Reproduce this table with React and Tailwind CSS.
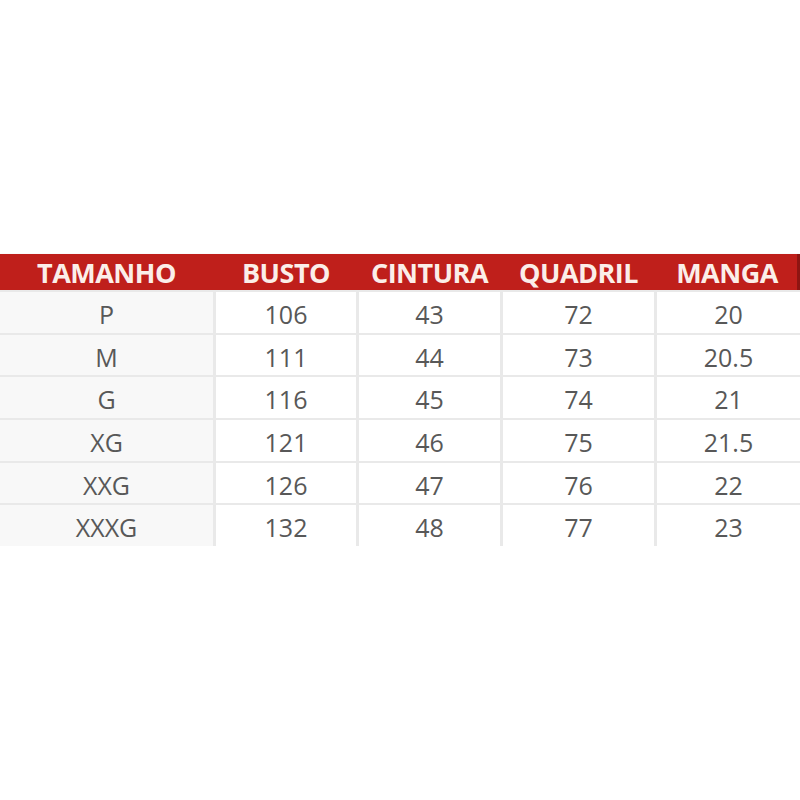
import React from "react";

const headers = ["TAMANHO", "BUSTO", "CINTURA", "QUADRIL", "MANGA"];
const rows = [
  ["P", "106", "43", "72", "20"],
  ["M", "111", "44", "73", "20.5"],
  ["G", "116", "45", "74", "21"],
  ["XG", "121", "46", "75", "21.5"],
  ["XXG", "126", "47", "76", "22"],
  ["XXXG", "132", "48", "77", "23"],
];

const cols = "grid grid-cols-[213px_140px_141px_151px_1fr] gap-x-[3px]";

export default function App() {
  return (
    <div className="w-[800px] h-[800px] bg-white flex flex-col" style={{ fontFamily: '"Open Sans", "Liberation Sans", sans-serif' }}>
      <div className="h-[254px]" />
      <div className={`${cols} h-[36px] bg-[#bf1f1b] border-r-[3px] border-[#8e1512] shadow-[0_1px_2px_rgba(0,0,0,0.25)]`}>
        {headers.map((h) => (
          <div key={h} className="flex items-center justify-center text-[27px] font-bold text-[#fbeee9] tracking-[-0.5px] leading-none">
            {h}
          </div>
        ))}
      </div>
      <div className="flex flex-col bg-[#e9e9e9] gap-[2px] pt-[2px]">
        {rows.map((r, i) => (
          <div key={i} className={`${cols} h-[40.7px]`}>
            {r.map((c, j) => (
              <div
                key={j}
                className={`flex items-center justify-center pt-[4px] text-[25px] text-[#585858] leading-none ${j === 0 ? "bg-[#f8f8f8]" : "bg-white"}`}
              >
                {c}
              </div>
            ))}
          </div>
        ))}
      </div>
    </div>
  );
}
